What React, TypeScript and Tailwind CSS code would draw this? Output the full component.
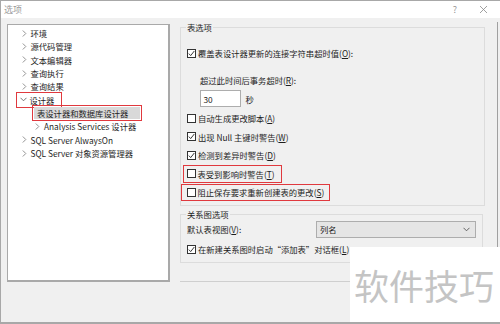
import React from "react";

const font = { fontFamily: '"Noto Sans CJK SC", "Noto Sans", sans-serif' };

type TreeItem = {
  label: string;
  level: number;
  expanded?: boolean;
  leaf?: boolean;
  selected?: boolean;
  marked?: boolean;
};

const treeItems: TreeItem[] = [
  { label: "环境", level: 0 },
  { label: "源代码管理", level: 0 },
  { label: "文本编辑器", level: 0 },
  { label: "查询执行", level: 0 },
  { label: "查询结果", level: 0 },
  { label: "设计器", level: 0, expanded: true, marked: true },
  { label: "表设计器和数据库设计器", level: 1, leaf: true, selected: true },
  { label: "Analysis Services 设计器", level: 1 },
  { label: "SQL Server AlwaysOn", level: 0 },
  { label: "SQL Server 对象资源管理器", level: 0 },
];

function Chevron({ open }: { open?: boolean }) {
  return open ? (
    <svg width="7" height="5" viewBox="0 0 7 5" className="shrink-0">
      <polyline points="0.5,0.8 3.5,3.8 6.5,0.8" fill="none" stroke="#666" strokeWidth="0.9" />
    </svg>
  ) : (
    <svg width="5" height="7" viewBox="0 0 5 7" className="shrink-0">
      <polyline points="0.8,0.5 3.8,3.5 0.8,6.5" fill="none" stroke="#888" strokeWidth="0.9" />
    </svg>
  );
}

function CheckBox({ checked }: { checked?: boolean }) {
  return (
    <span className="w-[9px] h-[9px] border border-[#333] bg-white flex items-center justify-center shrink-0">
      {checked && (
        <svg width="7" height="7" viewBox="0 0 7 7">
          <polyline points="0.8,3.6 2.7,5.6 6.3,1" fill="none" stroke="#222" strokeWidth="0.9" />
        </svg>
      )}
    </span>
  );
}

function Opt({ checked, text, k, after = "", boxed }: { checked?: boolean; text: string; k: string; after?: string; boxed?: string }) {
  return (
    <div className="h-[18.4px] flex items-center">
      <div className={`flex items-center gap-[2px] shrink-0 ${boxed ?? ""}`}>
        <CheckBox checked={checked} />
        <span className="whitespace-nowrap">
          {text}(<u>{k}</u>){after}
        </span>
      </div>
    </div>
  );
}

export default function App() {
  return (
    <div
      className="w-[500px] h-[324px] flex flex-col border-l border-t border-b-2 border-[#a8a8a8] text-[8.3px] text-[#1e1e1e] relative overflow-hidden"
      style={font}
    >
      {/* title bar */}
      <div className="h-[17px] bg-white flex items-center pl-[3px] pr-[12px] shrink-0">
        <span className="text-[9px] text-[#9a9a9a]">选项</span>
        <span className="ml-auto text-[9px] text-[#999]">?</span>
        <svg width="9" height="9" viewBox="0 0 9 9" className="ml-[22px]">
          <path d="M1 1 L8 8 M8 1 L1 8" stroke="#888" strokeWidth="0.8" />
        </svg>
      </div>

      <div className="flex-1 bg-[#f0f0f0] flex pl-[6px] pt-[6px]">
        {/* tree */}
        <div className="w-[163px] h-[258px] bg-white border border-[#a9a9a9] border-r-2 border-b-2 pt-[1.5px] shrink-0">
          {treeItems.map((it) => (
            <div
              key={it.label}
              className={`h-[13.33px] flex items-center ${it.level === 1 ? "pl-[26px]" : "pl-[12.5px]"}`}
            >
              {it.leaf ? (
                <span className="flex items-center h-[12px] pl-[3px] pr-[12px] bg-[#d9d9d9] outline-[1.5px] outline-solid outline-[#e0393e] outline-offset-[1.5px] whitespace-nowrap">
                  {it.label}
                </span>
              ) : (
                <span
                  className={`flex items-center whitespace-nowrap ${
                    it.marked ? "outline-[1.5px] outline-solid outline-[#e0393e] outline-offset-[1px] -ml-[3px] pl-[2px] pr-[6px]" : ""
                  }`}
                >
                  <span className="w-[7px] flex justify-center">
                    <Chevron open={it.expanded} />
                  </span>
                  <span className="ml-[3px]">{it.label}</span>
                </span>
              )}
            </div>
          ))}
        </div>

        {/* options */}
        <div className="flex-1 ml-[10px] -mt-[2px] border-r border-[#a0a0a0] mr-[2px] flex flex-col">
          <fieldset className="border border-[#dcdcdc] w-[305px] h-[184px] px-[6px]">
            <legend className="px-[1px] -ml-[1px] leading-[10px]">表选项</legend>
            <div className="mt-[12px]">
              <Opt checked text="覆盖表设计器更新的连接字符串超时值" k="O" after=":" />
            </div>
            <div className="pl-[13px] mt-[12px] leading-[12px]">
              超过此时间后事务超时(<u>R</u>):
            </div>
            <div className="pl-[12.5px] mt-[4px] flex items-center">
              <div className="w-[41px] h-[17px] bg-white border border-[#adadad] flex items-center pl-[3px]">30</div>
              <span className="ml-[5px]">秒</span>
            </div>
            <div className="mt-[2px]">
              <Opt text="自动生成更改脚本" k="A" />
              <Opt checked text="出现 Null 主键时警告" k="W" />
              <Opt checked text="检测到差异时警告" k="D" />
              <Opt
                text="表受到影响时警告"
                k="T"
                boxed="border-[1.5px] border-[#e0393e] h-[18px] w-[99px] -ml-[4.5px] pl-[3px]"
              />
              <Opt
                text="阻止保存要求重新创建表的更改"
                k="S"
                boxed="border-[1.5px] border-[#e0393e] h-[17px] w-[149px] -ml-[6.5px] pl-[5px]"
              />
            </div>
          </fieldset>

          <fieldset className="border border-[#dcdcdc] w-[303px] h-[54px] px-[6px] mt-[3px]">
            <legend className="px-[1px] -ml-[1px] leading-[10px]">关系图选项</legend>
            <div className="flex items-center mt-[2px]">
              <span>
                默认表视图(<u>V</u>):
              </span>
              <div className="ml-auto w-[160px] h-[17px] bg-[#e5e5e5] border border-[#adadad] flex items-center pl-[3px] pr-[5px]">
                <span>列名</span>
                <svg width="7" height="5" viewBox="0 0 7 5" className="ml-auto">
                  <polyline points="0.5,0.8 3.5,3.8 6.5,0.8" fill="none" stroke="#555" strokeWidth="0.9" />
                </svg>
              </div>
            </div>
            <div className="mt-[2px]">
              <Opt checked text="在新建关系图时启动“添加表”对话框" k="L" />
            </div>
          </fieldset>

          <div className="mt-[18px] border-t border-[#cfcfcf]" />
        </div>
      </div>

      {/* watermark */}
      <div className="absolute right-0 bottom-0 w-[150px] h-[75px] bg-white flex items-center pl-[4px]">
        <span className="text-[35px] leading-none text-[#c4c4c4] whitespace-nowrap" style={font}>
          软件技巧
        </span>
      </div>
    </div>
  );
}
